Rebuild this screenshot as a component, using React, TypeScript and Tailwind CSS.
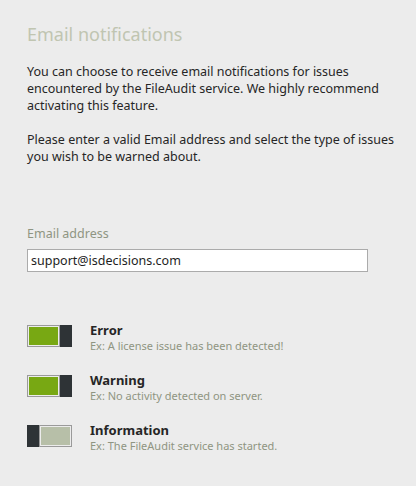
const font = { fontFamily: '"Noto Sans", "Open Sans", sans-serif' };

type Level = {
  name: string;
  example: string;
  on: boolean;
};

const levels: Level[] = [
  { name: "Error", example: "Ex: A license issue has been detected!", on: true },
  { name: "Warning", example: "Ex: No activity detected on server.", on: true },
  { name: "Information", example: "Ex: The FileAudit service has started.", on: false },
];

function Toggle({ on }: { on: boolean }) {
  const track = (
    <div className="flex-1 border border-[#9a9a9a] p-px">
      <div className={`h-full ${on ? "bg-[#78a813]" : "bg-[#b7bfa8]"}`} />
    </div>
  );
  const thumb = <div className="w-[12px] bg-[#2e3336]" />;
  return (
    <div className="flex h-[22px] w-[45px] shrink-0">
      {on ? track : thumb}
      {on ? thumb : track}
    </div>
  );
}

export default function App() {
  return (
    <div className="min-h-[486px] w-[416px] bg-[#ececec] pl-[27px] pt-[22px] text-[#262626]" style={font}>
      <h1 className="text-[18px] leading-[25px] text-[#c0c5b1]">Email notifications</h1>

      <div className="mt-[16px] w-[380px] text-[12.5px] leading-[17px]">
        <p>
          You can choose to receive email notifications for issues encountered by the FileAudit
          service. We highly recommend activating this feature.
        </p>
        <p className="mt-[17px]">
          Please enter a valid Email address and select the type of issues you wish to be warned
          about.
        </p>
      </div>

      <label className="mt-[60px] block text-[12.5px] leading-[17px] text-[#8f9582]">Email address</label>
      <input
        className="mt-[7px] block h-[23px] w-[341px] border border-[#ababab] bg-white px-[3px] text-[12.5px] text-[#1e1e1e] outline-none"
        style={font}
        defaultValue="support@isdecisions.com"
      />

      <div className="mt-[53px] flex flex-col gap-[22px]">
        {levels.map((l) => (
          <div key={l.name} className="flex items-start gap-[18px]">
            <Toggle on={l.on} />
            <div className="-mt-[3px]">
              <div className="text-[13px] font-bold leading-[16px] text-[#262626]">{l.name}</div>
              <div className="text-[11px] leading-[15px] text-[#8f9582]">{l.example}</div>
            </div>
          </div>
        ))}
      </div>
    </div>
  );
}
